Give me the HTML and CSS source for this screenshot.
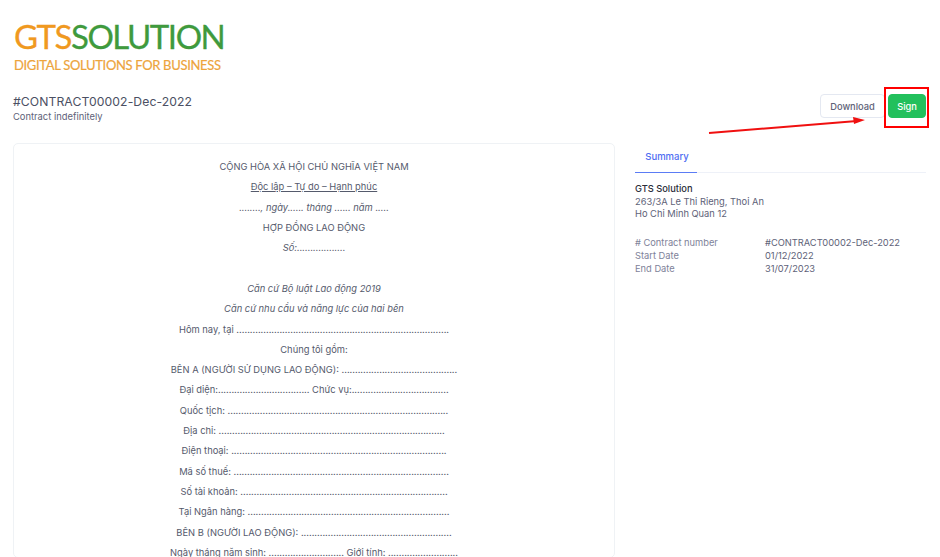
FILE: index.html
```html
<!DOCTYPE html>
<html lang="vi">
<head>
<meta charset="utf-8">
<title>Contract</title>
<link rel="stylesheet" href="styles.css">
</head>
<body>
<div class="page">
  <div class="logo">
    <div class="logo-name"><span class="orange">GTS</span><span class="green">SOLUTION</span></div>
    <div class="logo-tag">DIGITAL SOLUTIONS FOR BUSINESS</div>
  </div>
  <div class="head">
    <div>
      <div class="title">#CONTRACT00002-Dec-2022</div>
      <div class="sub">Contract indefinitely</div>
    </div>
    <div class="actions">
      <button class="btn btn-light">Download</button>
      <button class="btn btn-green">Sign</button>
    </div>
  </div>
  <div class="main">
    <div class="card">
      <p>CỘNG HÒA XÃ HỘI CHỦ NGHĨA VIỆT NAM</p>
      <p><u>Độc lập – Tự do – Hạnh phúc</u></p>
      <p><i>........, ngày...... tháng ...... năm .....</i></p>
      <p>HỢP ĐỒNG LAO ĐỘNG</p>
      <p><i>Số:..................</i></p>
      <p>&nbsp;</p>
      <p><i>Căn cứ Bộ luật Lao động 2019</i></p>
      <p><i>Căn cứ nhu cầu và năng lực của hai bên</i></p>
      <p>Hôm nay, tại ...............................................................................</p>
      <p>Chúng tôi gồm:</p>
      <p>BÊN A (NGƯỜI SỬ DỤNG LAO ĐỘNG): ...........................................</p>
      <p>Đại diện:.................................. Chức vụ:....................................</p>
      <p>Quốc tịch: ..................................................................................</p>
      <p>Địa chỉ: ....................................................................................</p>
      <p>Điện thoại: ................................................................................</p>
      <p>Mã số thuế: ................................................................................</p>
      <p>Số tài khoản: .............................................................................</p>
      <p>Tại Ngân hàng: ...........................................................................</p>
      <p>BÊN B (NGƯỜI LAO ĐỘNG): ........................................................</p>
      <p>Ngày tháng năm sinh: ............................ Giới tính: ..........................</p>
    </div>
    <div class="side">
      <div class="tabs"><div class="tab">Summary</div></div>
      <div class="company">
        <div class="company-name">GTS Solution</div>
        <div>263/3A Le Thi Rieng, Thoi An</div>
        <div>Ho Chi Minh Quan 12</div>
      </div>
      <dl class="facts">
        <dt># Contract number</dt><dd>#CONTRACT00002-Dec-2022</dd>
        <dt>Start Date</dt><dd>01/12/2022</dd>
        <dt>End Date</dt><dd>31/07/2023</dd>
      </dl>
    </div>
  </div>
</div>
<div class="mark"></div>
<svg class="arrow" width="170" height="24" viewBox="0 0 170 24">
  <path d="M2 21 L150 9" stroke="#f01010" stroke-width="2" fill="none"/>
  <path d="M146 5 L158 8 L147 12 Z" fill="#f01010"/>
</svg>
</body>
</html>
```
FILE: styles.css
```css
* { box-sizing: border-box; }
html, body { margin: 0; height: 100%; overflow: hidden; background: #fff; }
body { font-family: Inter, "Liberation Sans", sans-serif; color: #3f4254; }
.page { height: 557px; overflow: hidden; padding: 16px 14px 0 13px; }
.logo { padding-left: 1px; height: 76px; }
.logo-name { font-family: Lato, sans-serif; font-size: 33px; line-height: 41px; letter-spacing: -1.45px; -webkit-text-stroke: 0.3px currentColor; }
.orange { color: #f0991f; }
.green { color: #3f9a3d; }
.logo-tag { font-family: Lato, sans-serif; font-size: 13px; line-height: 16px; letter-spacing: -0.33px; color: #eda43c; -webkit-text-stroke: 0.2px currentColor; }
.head { display: flex; justify-content: space-between; align-items: flex-start; height: 51px; }
.title { font-size: 12.2px; line-height: 18px; margin-top: 1px; letter-spacing: .09px; color: #4b5063; }
.sub { font-size: 9.4px; line-height: 13px; color: #5e6278; margin-top: -1px; }
.actions { display: flex; gap: 3px; margin-top: 2px; }
.btn { font: 500 9.3px Inter, sans-serif; height: 24px; border-radius: 4px; border: 1px solid #e4e8f1; background: #fff; color: #5e6278; }
.btn-light { width: 65px; padding: 0; }
.btn-green { width: 38px; padding: 0; background: #22c05c; border-color: #22c05c; color: #fff; }
.main { display: grid; grid-template-columns: 602px 1fr; column-gap: 20px; align-items: start; }
.card { border: 1px solid #eff2f5; border-radius: 5px; height: 415px; overflow: hidden; padding: 13px 0 0; text-align: center; font-size: 9.35px; color: #555a6c; }
.card p { margin: 0; line-height: 20.32px; white-space: nowrap; }
.side { padding-top: 1px; }
.tabs { border-bottom: 1px solid #eef1f8; height: 29px; }
.tab { width: 62px; height: 29px; padding: 6px 0 0 2px; font-size: 9.5px; line-height: 13px; text-align: center; color: #4f6ef2; font-weight: 500; border-bottom: 1px solid #5b7cf5; }
.company { margin-top: 10px; font-size: 9.3px; line-height: 12.7px; color: #5e6278; }
.company-name { color: #2b2d3a; font-weight: 500; }
.facts { display: grid; grid-template-columns: 130px 1fr; margin: 15px 0 0; font-size: 9.3px; line-height: 13px; }
.facts dt { color: #7e8299; }
.facts dd { margin: 0; color: #5e6278; }
.mark { position: absolute; left: 884px; top: 87px; width: 45px; height: 41px; border: 2px solid #f00; }
.arrow { position: absolute; left: 707px; top: 112px; }
```
